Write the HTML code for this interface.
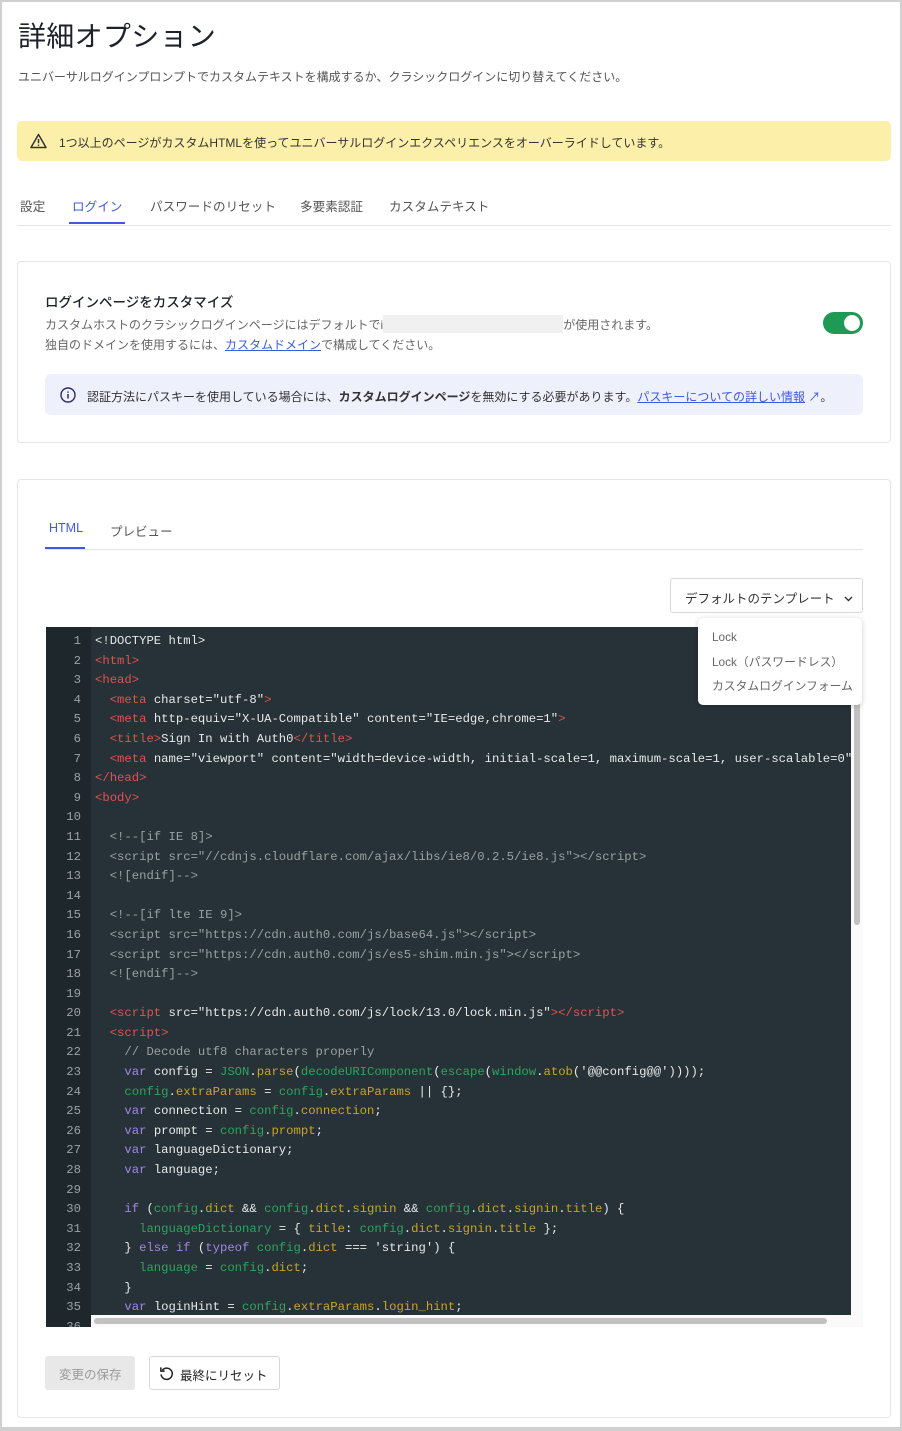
<!DOCTYPE html>
<html><head><meta charset="utf-8"><style>
*{box-sizing:border-box;margin:0;padding:0}
body{width:902px;height:1431px;background:#fff;font-family:"Liberation Sans","Noto Sans CJK JP",sans-serif;color:#1e212a;position:relative;overflow:hidden}
.frame{position:absolute;left:0;top:0;width:902px;height:1431px;border:2px solid #d0d0d0;border-bottom-width:4px}
.abs{position:absolute}
h1{position:absolute;left:18px;top:15px;font-size:28px;font-weight:400;letter-spacing:0.3px;color:#1e212a}
.sub{left:18px;top:68px;font-size:12px;color:#545454}
.warn{left:17px;top:121px;width:874px;height:40px;background:#fcefaa;border-radius:5px;font-size:12px;color:#333;padding:13px 0 0 42px}
.tabs{left:17px;top:195px;width:874px;height:31px;border-bottom:1px solid #e3e3e3;font-size:12.6px;color:#555}
.tabs span{position:absolute;top:1px}
.card{border:1px solid #e6e6e6;border-radius:4px;left:17px;width:874px}
.code{left:46px;top:627px;width:805px;height:700px;background:#263238;overflow:hidden;font-family:"Liberation Mono",monospace;font-size:12.25px;line-height:19.6px;color:#e8e8e8}
.gut{position:absolute;left:0;top:0;width:45px;height:100%;background:#1e272c}
.ln{position:absolute;left:0;top:5px;width:35px;text-align:right;color:#9aa2a6;white-space:pre}
.src{position:absolute;left:49px;top:5px;white-space:pre}
.t{color:#e0524c}.k{color:#a584e6}.g{color:#2da55b}.y{color:#caa428}.c{color:#9aa0a3}
</style></head><body>
<div class="frame"></div>
<h1>詳細オプション</h1>
<div class="abs sub">ユニバーサルログインプロンプトでカスタムテキストを構成するか、クラシックログインに切り替えてください。</div>
<div class="abs warn"><svg class="abs" style="left:13px;top:12px" width="17" height="16" viewBox="0 0 17 16"><path d="M8.5 1.5L16 14.5H1z" fill="none" stroke="#333" stroke-width="1.5" stroke-linejoin="round"/><path d="M8.5 6v4.2M8.5 11.6v1.3" stroke="#333" stroke-width="1.5"/></svg>1つ以上のページがカスタムHTMLを使ってユニバーサルログインエクスペリエンスをオーバーライドしています。</div>
<div class="abs tabs"><span style="left:3px">設定</span><span style="left:55px;color:#3f59e4">ログイン</span><span style="left:133px">パスワードのリセット</span><span style="left:283px">多要素認証</span><span style="left:372px">カスタムテキスト</span>
<div class="abs" style="left:52px;top:27px;width:56px;height:2px;background:#3f59e4"></div></div>

<div class="abs card" style="top:261px;height:182px"></div>
<div class="abs" style="left:45px;top:291px;font-size:13.5px;font-weight:500;color:#1e212a">ログインページをカスタマイズ</div>
<div class="abs" style="left:45px;top:315px;font-size:12px;color:#666;line-height:20px">カスタムホストのクラシックログインページにはデフォルトでi<span style="display:inline-block;width:180px;height:18px;background:#f0f0f0;vertical-align:-4px"></span>が使用されます。<br>独自のドメインを使用するには、<span style="color:#3f59e4;text-decoration:underline">カスタムドメイン</span>で構成してください。</div>
<div class="abs" style="left:823px;top:312px;width:40px;height:22px;border-radius:11px;background:#1f9a55"><div class="abs" style="left:21px;top:3px;width:16px;height:16px;border-radius:8px;background:#fff"></div></div>
<div class="abs" style="left:45px;top:374px;width:818px;height:41px;background:#eef0fc;border-radius:6px;font-size:12px;color:#333;padding:14px 0 0 42px"><svg class="abs" style="left:15px;top:13px" width="16" height="16" viewBox="0 0 16 16"><circle cx="8" cy="8" r="7" fill="none" stroke="#2a2f60" stroke-width="1.4"/><path d="M8 7v4.5M8 4.5v1.2" stroke="#2a2f60" stroke-width="1.5"/></svg>認証方法にパスキーを使用している場合には、<b>カスタムログインページ</b>を無効にする必要があります。<span style="color:#3f59e4;text-decoration:underline">パスキーについての詳しい情報</span> <span style="color:#3f59e4">↗</span>。</div>

<div class="abs card" style="top:479px;height:939px"></div>
<div class="abs" style="left:45px;top:519px;width:818px;height:31px;border-bottom:1px solid #e3e3e3;font-size:12.5px;color:#555"><span class="abs" style="left:4px;top:2px;color:#3f59e4">HTML</span><span class="abs" style="left:65px;top:2px">プレビュー</span><div class="abs" style="left:0;top:28px;width:40px;height:2px;background:#3f59e4"></div></div>
<div class="abs" style="left:670px;top:578px;width:193px;height:35px;border:1px solid #d8d8d8;border-radius:3px;font-size:12.5px;color:#333;padding:9px 0 0 14px">デフォルトのテンプレート <svg style="margin-left:6px;vertical-align:1px" width="9" height="6" viewBox="0 0 9 6"><path d="M1 1l3.5 3.5L8 1" fill="none" stroke="#333" stroke-width="1.4"/></svg></div>

<div class="abs code"><div class="gut"></div>
<div class="ln">1
2
3
4
5
6
7
8
9
10
11
12
13
14
15
16
17
18
19
20
21
22
23
24
25
26
27
28
29
30
31
32
33
34
35
36</div>
<div class="src">&lt;!DOCTYPE html&gt;
<span class="t">&lt;html&gt;</span>
<span class="t">&lt;head&gt;</span>
  <span class="t">&lt;meta</span> charset="utf-8"<span class="t">&gt;</span>
  <span class="t">&lt;meta</span> http-equiv="X-UA-Compatible" content="IE=edge,chrome=1"<span class="t">&gt;</span>
  <span class="t">&lt;title&gt;</span>Sign In with Auth0<span class="t">&lt;/title&gt;</span>
  <span class="t">&lt;meta</span> name="viewport" content="width=device-width, initial-scale=1, maximum-scale=1, user-scalable=0"
<span class="t">&lt;/head&gt;</span>
<span class="t">&lt;body&gt;</span>

<span class="c">  &lt;!--[if IE 8]&gt;
  &lt;script src="//cdnjs.cloudflare.com/ajax/libs/ie8/0.2.5/ie8.js"&gt;&lt;/script&gt;
  &lt;![endif]--&gt;

  &lt;!--[if lte IE 9]&gt;
  &lt;script src="https://cdn.auth0.com/js/base64.js"&gt;&lt;/script&gt;
  &lt;script src="https://cdn.auth0.com/js/es5-shim.min.js"&gt;&lt;/script&gt;
  &lt;![endif]--&gt;</span>

  <span class="t">&lt;script</span> src="https://cdn.auth0.com/js/lock/13.0/lock.min.js"<span class="t">&gt;&lt;/script&gt;</span>
  <span class="t">&lt;script&gt;</span>
<span class="c">    // Decode utf8 characters properly</span>
    <span class="k">var</span> config = <span class="g">JSON</span>.<span class="y">parse</span>(<span class="g">decodeURIComponent</span>(<span class="g">escape</span>(<span class="g">window</span>.<span class="y">atob</span>('@@config@@'))));
    <span class="g">config</span>.<span class="y">extraParams</span> = <span class="g">config</span>.<span class="y">extraParams</span> || {};
    <span class="k">var</span> connection = <span class="g">config</span>.<span class="y">connection</span>;
    <span class="k">var</span> prompt = <span class="g">config</span>.<span class="y">prompt</span>;
    <span class="k">var</span> languageDictionary;
    <span class="k">var</span> language;

    <span class="k">if</span> (<span class="g">config</span>.<span class="y">dict</span> &amp;&amp; <span class="g">config</span>.<span class="y">dict</span>.<span class="y">signin</span> &amp;&amp; <span class="g">config</span>.<span class="y">dict</span>.<span class="y">signin</span>.<span class="y">title</span>) {
      <span class="g">languageDictionary</span> = { <span class="y">title</span>: <span class="g">config</span>.<span class="y">dict</span>.<span class="y">signin</span>.<span class="y">title</span> };
    } <span class="k">else if</span> (<span class="k">typeof</span> <span class="g">config</span>.<span class="y">dict</span> === 'string') {
      <span class="g">language</span> = <span class="g">config</span>.<span class="y">dict</span>;
    }
    <span class="k">var</span> loginHint = <span class="g">config</span>.<span class="y">extraParams</span>.<span class="y">login_hint</span>;
</div>
<div class="abs" style="left:45px;top:688px;width:760px;height:12px;background:#fafafa"><div class="abs" style="left:3px;top:3px;width:733px;height:6px;border-radius:3px;background:#c1c1c1"></div></div>
</div>
<div class="abs" style="left:851px;top:627px;width:12px;height:700px;background:#fafafa"><div class="abs" style="left:3px;top:73px;width:6px;height:225px;border-radius:3px;background:#c1c1c1"></div></div>

<div class="abs" style="left:698px;top:618px;width:164px;height:87px;background:#fff;border-radius:5px;box-shadow:0 1px 6px rgba(0,0,0,.18);font-size:11.8px;color:#666;line-height:24.5px;padding:7px 0 0 14px">Lock<br>Lock（パスワードレス）<br>カスタムログインフォーム</div>

<div class="abs" style="left:45px;top:1356px;width:90px;height:34px;background:#e8e8e8;border-radius:3px;font-size:12.5px;color:#9a9a9a;padding:8px 0 0 14px">変更の保存</div>
<div class="abs" style="left:149px;top:1356px;width:131px;height:34px;border:1px solid #d8d8d8;border-radius:3px;font-size:12.5px;color:#222;padding:8px 0 0 30px"><svg class="abs" style="left:9px;top:9px" width="15" height="15" viewBox="0 0 16 16"><path d="M3.5 4.5A6 6 0 1 1 2.2 9" fill="none" stroke="#222" stroke-width="1.6"/><path d="M2 1.5v4h4" fill="none" stroke="#222" stroke-width="1.6"/></svg>最終にリセット</div>
</body></html>
